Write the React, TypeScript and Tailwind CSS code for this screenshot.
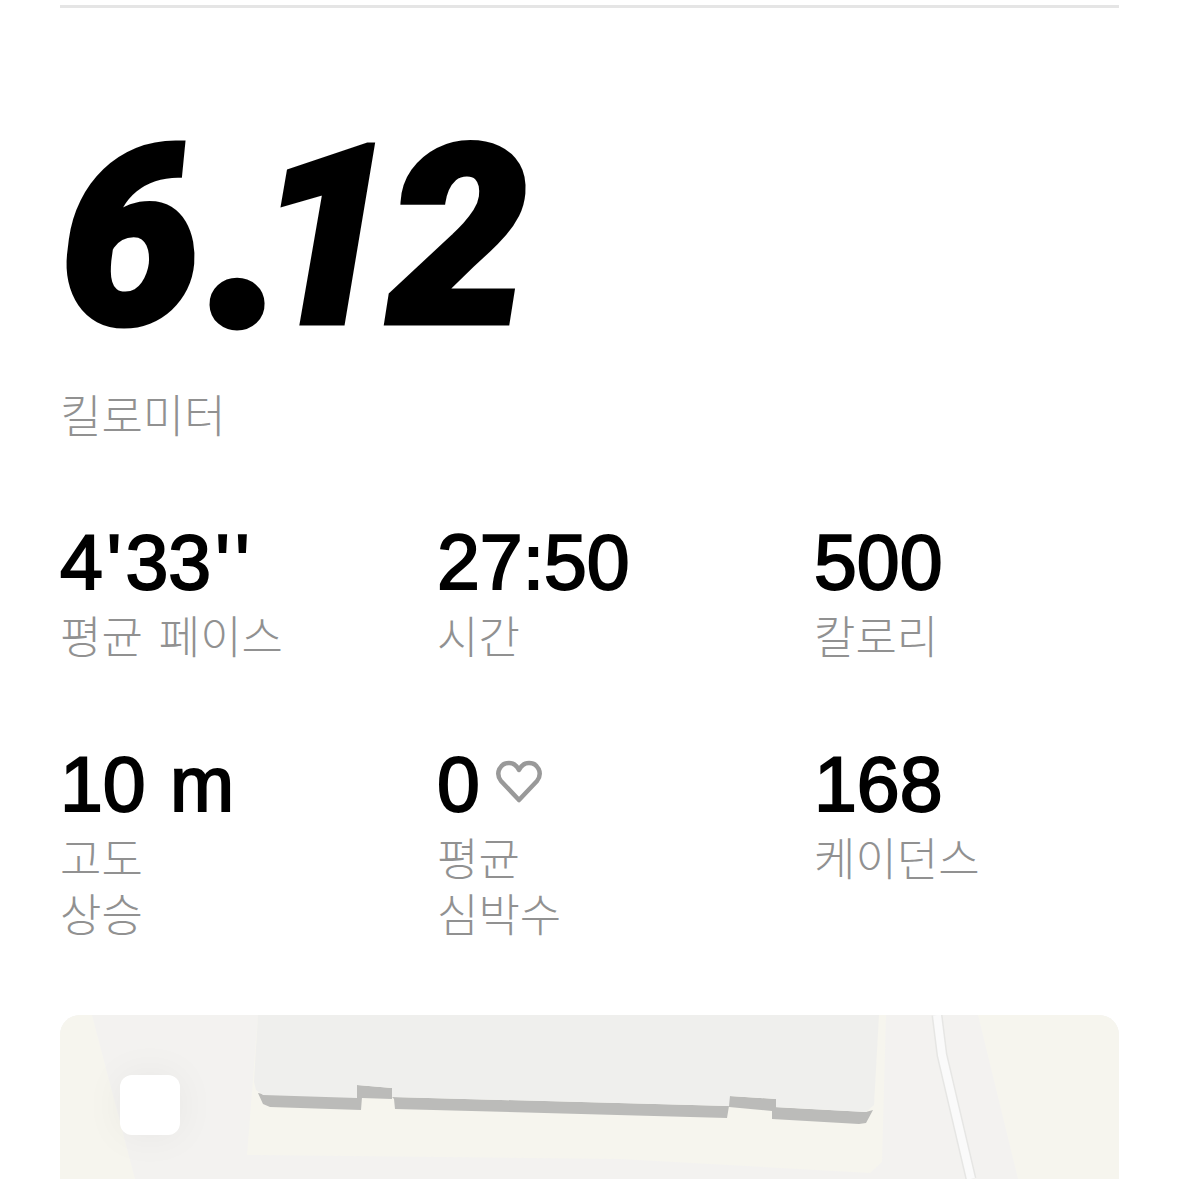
import React from 'react';

const labelFont = "font-['Noto_Sans_CJK_KR','Noto_Sans',sans-serif]";
const valueFont = "font-['Liberation_Sans',Arial,sans-serif]";

const pace = (
  <>
    4<span className="mx-[4px]">'</span>33<span className="ml-[4px]">'</span><span className="ml-[5px]">'</span>
  </>
);

const stats: { value: React.ReactNode; label: string; heart?: boolean }[] = [
  { value: pace, label: '평균 페이스' },
  { value: '27:50', label: '시간' },
  { value: '500', label: '칼로리' },
  { value: '10 m', label: '고도\n상승' },
  { value: '0', label: '평균\n심박수', heart: true },
  { value: '168', label: '케이던스' },
];

const MapDrawing = () => (
  <svg className="block w-full h-full" viewBox="60 1015 1059 164">
    <rect x="60" y="1015" width="1059" height="164" fill="#f3f2f0" />
    <polygon points="60,1015 92,1015 135,1179 60,1179" fill="#f6f5ee" />
    <polygon points="978,1015 1119,1015 1119,1179 1018,1179" fill="#f6f5ee" />
    <polygon points="258,1015 886,1015 882,1162 870,1173 620,1159 247,1155" fill="#f6f5ee" />
    <polygon points="258,1093 263,1104 270,1107 361,1110 362,1097 263,1094" fill="#bbbbb9" />
    <polygon points="357,1085 392,1088 392,1099 362,1098 357,1099" fill="#bbbbb9" />
    <polygon points="392,1097 394,1099 395,1109 727,1118 729,1106" fill="#bbbbb9" />
    <polygon points="729,1096 776,1099 776,1108 772,1111 729,1107" fill="#bbbbb9" />
    <polygon points="772,1107 866,1112 873,1110 866,1123 859,1124 772,1119" fill="#bbbbb9" />
    <polygon
      points="258,1015 879,1015 874,1105 866,1112 776,1107 776,1099 730,1096 729,1106 392,1097 392,1088 357,1085 357,1098 263,1095 256,1090 254,1082"
      fill="#efefed"
    />
    <polyline points="937,1015 942,1055 971,1179" fill="none" stroke="#e6e6e4" strokeWidth="11" />
    <polyline points="937,1015 942,1055 971,1179" fill="none" stroke="#fafafa" strokeWidth="8" />
  </svg>
);

export default function App() {
  return (
    <div className="h-[1179px] overflow-hidden bg-white px-[60px] pt-[5px]">
      <div className="h-[3px] bg-[#e5e5e5]" />

      <div className="mt-[100px] h-[260px] font-['Roboto',sans-serif] text-[250px] leading-[260px] font-black italic tracking-[-9px] text-black [-webkit-text-stroke:5px_black]">
        6<span className="ml-[19px] tracking-[-28px] [-webkit-text-stroke:11px_black]">.</span>12
      </div>

      <div className={`${labelFont} mt-[18px] text-[45px] leading-[56px] font-light text-[#919191]`}>킬로미터</div>

      <div className="mt-[78px] grid grid-cols-[377px_377px_1fr]">
        {stats.map((stat, i) => (
          <div key={i} className={i < 3 ? 'h-[222px]' : 'h-[260px]'}>
            <div className={`${valueFont} flex items-center h-[85px] mb-[2px] text-[77px] leading-[85px] text-black [word-spacing:3px] [-webkit-text-stroke:2px_black] [font-kerning:none]`}>
              <span>{stat.value}</span>
              {stat.heart && (
                <svg className="ml-[16px] mb-[5px] w-[46px] h-[44px]" viewBox="0 0 46 44" fill="none" stroke="#999999" strokeWidth="4.5" strokeLinejoin="round">
                  <path d="M23 40 L5 21 C-1 13 4 3 13 3 C18 3 21 6 23 10 C25 6 28 3 33 3 C42 3 47 13 41 21 Z" />
                </svg>
              )}
            </div>
            <div className={`${labelFont} whitespace-pre-line [word-spacing:6px] text-[45px] leading-[56px] font-light text-[#919191]`}>{stat.label}</div>
          </div>
        ))}
      </div>

      <div className="relative h-[164px] mt-[13px] overflow-hidden rounded-t-[20px]">
        <MapDrawing />
        <div className="absolute left-[60px] top-[60px] w-[60px] h-[60px] rounded-[12px] bg-white shadow-[0_0_40px_rgba(0,0,0,0.05)]" />
      </div>
    </div>
  );
}
